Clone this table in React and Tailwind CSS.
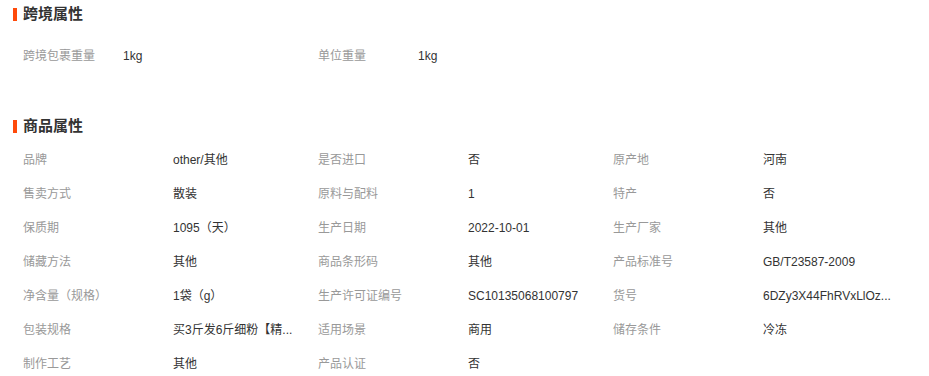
const crossBorder = [
  ["跨境包裹重量", "1kg"],
  ["单位重量", "1kg"],
];

const goods = [
  ["品牌", "other/其他"],
  ["是否进口", "否"],
  ["原产地", "河南"],
  ["售卖方式", "散装"],
  ["原料与配料", "1"],
  ["特产", "否"],
  ["保质期", "1095（天）"],
  ["生产日期", "2022-10-01"],
  ["生产厂家", "其他"],
  ["储藏方法", "其他"],
  ["商品条形码", "其他"],
  ["产品标准号", "GB/T23587-2009"],
  ["净含量（规格）", "1袋（g）"],
  ["生产许可证编号", "SC10135068100797"],
  ["货号", "6DZy3X44FhRVxLlOz..."],
  ["包装规格", "买3斤发6斤细粉【精..."],
  ["适用场景", "商用"],
  ["储存条件", "冷冻"],
  ["制作工艺", "其他"],
  ["产品认证", "否"],
];

const SectionTitle = ({ title }) => (
  <div className="flex items-center h-7">
    <span className="w-[4px] h-[13px] bg-[#ff4a0a]" />
    <span className="ml-[6px] text-[15px] font-bold text-[#333]">{title}</span>
  </div>
);

const App = () => {
  return (
    <div
      className="w-[929px] h-[376px] bg-white pl-[13px] overflow-hidden"
      style={{ fontFamily: '"Liberation Sans", "Noto Sans CJK SC", sans-serif' }}
    >
      <SectionTitle title="跨境属性" />
      <div className="flex flex-wrap mt-[11px] pl-[10px]">
        {crossBorder.map(([k, v]) => (
          <div key={k} className="flex items-center w-[295px] h-[34px] text-xs">
            <span className="w-[100px] text-[#999]">{k}</span>
            <span className="whitespace-nowrap text-[#333]">{v}</span>
          </div>
        ))}
      </div>

      <div className="mt-[39px]">
        <SectionTitle title="商品属性" />
      </div>
      <div className="flex flex-wrap w-[900px] mt-[3px] pl-[10px]">
        {goods.map(([k, v]) => (
          <div key={k} className="flex items-center w-[295px] h-[34px] text-xs">
            <span className="w-[150px] text-[#999]">{k}</span>
            <span className="whitespace-nowrap text-[#333]">{v}</span>
          </div>
        ))}
      </div>
    </div>
  );
};

export default App;
